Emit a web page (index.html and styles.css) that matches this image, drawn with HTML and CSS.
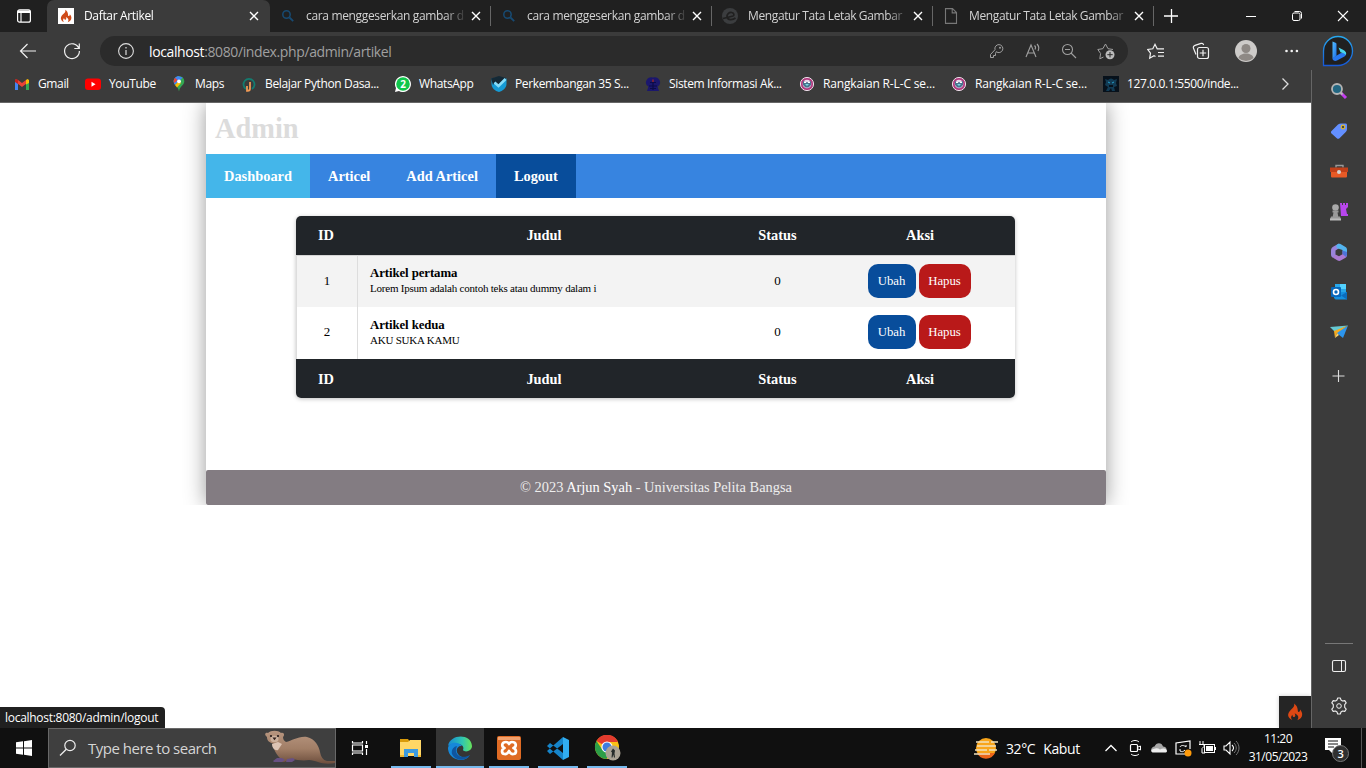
FILE: index.html
```html
<!DOCTYPE html>
<html lang="id">
<head>
<meta charset="utf-8">
<title>Daftar Artikel</title>
<link rel="stylesheet" href="styles.css">
</head>
<body>
<svg class="defs" width="0" height="0">
  <symbol id="x" viewBox="0 0 16 16"><path d="M4 4l8 8M12 4l-8 8" stroke="currentColor" stroke-width="1.4" fill="none"/></symbol>
  <symbol id="lens" viewBox="0 0 16 16"><circle cx="6.5" cy="6.5" r="3.7" fill="none" stroke="#174a72" stroke-width="1.5"/><path d="M9.5 9.500l3.700 3.700" stroke="#174a72" stroke-width="1.800"/></symbol>
  <symbol id="flame" viewBox="0 0 16 18"><path d="M7 .5c1 3-1.200 4.300-3.300 6.600C1.500 9.500.2 12 2 14.500c.8 1.200 2 2 3.300 2.600-1.600-1.700-1.600-3.800.2-5.400-.1 1.500.6 2.300 1.500 2.300 1.500-.1 1.700-1.600.7-3.700 3.600 1.700 4.600 4.300 2.600 6.900 3-.9 5-3 4.900-5.900 0-1.800-1-3.500-2.200-4.700.2 1.600-.6 2.500-1.300 2.400-1.900-.4.600-4.800-4.700-8.500z"/></symbol>
  <symbol id="mask" viewBox="0 0 16 16"><circle cx="8" cy="8" r="6.600" fill="#b03c7f" stroke="#eadde7" stroke-width="1"/><circle cx="8" cy="8" r="4.300" fill="#e7d8ea"/><path d="M4 5l2.500 1.200h3L12 5v4l-2.500 2.500h-3L4 9z" fill="#48738e"/><path d="M5 6h2v1H5zM9 6h2v1H9z" fill="#fff"/><path d="M6 8h4l-2 2z" fill="#78dce4"/></symbol>
</svg>
<div class="browser">
  <header class="tabs">
    <div class="tab-menu"><svg width="16" height="16" viewBox="0 0 16 16"><rect x="1.600" y="1.800" width="12.800" height="12.400" rx="2" fill="none" stroke="#fff" stroke-width="1.200"/><path d="M2 2.500h12v2.500H2z" fill="#fff"/><path d="M5 5v9" stroke="#fff" stroke-width="1.100"/></svg></div>
    <div class="tab active"><span class="favicon white"><svg width="12" height="14"><use href="#flame" fill="#cf4a18"/></svg></span><span class="label">Daftar Artikel</span><svg class="close"><use href="#x"/></svg></div>
    <div class="tab"><svg class="favicon"><use href="#lens"/></svg><span class="label">cara menggeserkan gambar d</span><svg class="close"><use href="#x"/></svg></div>
    <div class="tab"><svg class="favicon"><use href="#lens"/></svg><span class="label">cara menggeserkan gambar d</span><svg class="close"><use href="#x"/></svg></div>
    <div class="tab"><svg class="favicon" viewBox="0 0 16 16"><circle cx="8" cy="8" r="8" fill="#3b3d3f"/><path d="M1 10.500l10-2.500c1.500-.6 1.200-3-1.200-3.500C7 4 4.500 6.500 5 9c.5 3.300 5.500 3.300 8.500 1" fill="none" stroke="#202020" stroke-width="1.700"/></svg><span class="label wide">Mengatur Tata Letak Gambar</span><svg class="close"><use href="#x"/></svg></div>
    <div class="tab"><svg class="favicon" viewBox="0 0 16 16"><path d="M2.500.600h7l4 4v10.800h-11zM9.200.700v4.200h4.200" fill="none" stroke="#777" stroke-width="1.100"/></svg><span class="label wide">Mengatur Tata Letak Gambar</span><svg class="close"><use href="#x"/></svg></div>
    <svg class="new-tab" width="16" height="16"><path d="M8.500 1v14M1 8h14" stroke="#fff" stroke-width="1.300"/></svg>
    <div class="window-controls">
      <svg width="16" height="16"><path d="M3 8.500h10" stroke="#fff"/></svg>
      <svg width="16" height="16"><rect x="3.500" y="5" width="7.500" height="7.500" rx="1.500" fill="none" stroke="#fff"/><path d="M5.500 3.500h5a2 2 0 0 1 2 2v5" fill="none" stroke="#fff"/></svg>
      <svg width="16" height="16"><path d="M3 3l10 10M13 3L3 13" stroke="#fff" stroke-width="1.100"/></svg>
    </div>
  </header>
  <div class="toolbar">
    <svg class="nav-icon" width="20" height="20"><path d="M18 10H2.500M9.500 3l-7 7 7 7" fill="none" stroke="#f1f1f1" stroke-width="1.200"/></svg>
    <svg class="nav-icon" width="20" height="20"><path d="M16.900 7.500A7.400 7.400 0 1 0 17.400 10M17.300 2.500v5h-5" fill="none" stroke="#f1f1f1" stroke-width="1.200"/></svg>
    <div class="address">
      <svg width="16" height="16"><circle cx="8" cy="8" r="7.400" fill="none" stroke="#ddd" stroke-width="1.100"/><path d="M8 7v5M8 4v1.500" stroke="#ddd" stroke-width="1.200"/></svg>
      <span class="url"><b>localhost</b>:8080/index.php/admin/artikel</span>
      <svg width="16" height="16"><path d="M7.300 8.700a4 4 0 1 0-1.300-2L1.500 11.500V14.500h3v-2h2v-2z" fill="none" stroke="#a0a0a0"/><circle cx="11" cy="4.800" r="1" fill="#a0a0a0"/></svg>
      <svg width="16" height="16"><path d="M1 14L6 2l5 12M3 10h6M9.500 2.500c1.200 1 1.200 2.700.5 4M12 1c2 2 2 5 1 7" fill="none" stroke="#a0a0a0" stroke-width="1.100"/></svg>
      <svg width="16" height="16"><circle cx="6.500" cy="6.500" r="5" fill="none" stroke="#a0a0a0" stroke-width="1.100"/><path d="M4 6.500h5M10 10l5 5" stroke="#a0a0a0" stroke-width="1.100"/></svg>
      <svg width="18" height="18"><path d="M6.500 15l-3.700 1.800.8-5.300L.8 7.500l5-.8L8.500 2l2.500 4.700 5 .8" fill="none" stroke="#a0a0a0"/><circle cx="13" cy="12.700" r="4.500" fill="#bcbcbc"/><path d="M13 10v5.400M10.300 12.700h5.400" stroke="#2b2b2b"/></svg>
    </div>
    <div class="actions">
      <svg width="18" height="18"><path d="M8.500 14.500l-1.500-.8-4.300 2.500.8-5L.8 7.500l5-.7 2.200-4.500 2.200 4.500H17M11 10.500h6M11 14.200h6" fill="none" stroke="#f1f1f1" stroke-width="1.200"/></svg>
      <svg width="18" height="18"><path d="M4 12.500L1.500 6.200C1 5 1.500 4 3 3.400l6-2c1.300-.4 2.200.2 2.600 1.600" fill="none" stroke="#f1f1f1" stroke-width="1.200"/><rect x="5.500" y="5.500" width="11" height="11" rx="2" fill="none" stroke="#f1f1f1" stroke-width="1.200"/><path d="M11 7.800v6.500M7.700 11h6.500" stroke="#f1f1f1" stroke-width="1.200"/></svg>
      <svg width="22" height="22"><circle cx="11" cy="11" r="11" fill="#cdcbc9"/><circle cx="11" cy="8.500" r="4.500" fill="#8e8985"/><path d="M3.500 18c1-6 14-6 15 0A11 11 0 0 1 3.500 18z" fill="#8e8985"/></svg>
      <svg width="16" height="16"><g fill="#f1f1f1"><circle cx="3.500" cy="8" r="1.300"/><circle cx="8.700" cy="8" r="1.300"/><circle cx="13.900" cy="8" r="1.300"/></g></svg>
      <svg width="32" height="32" viewBox="0 0 32 32"><defs><linearGradient id="bl" x2="0" y2="1"><stop stop-color="#27a8ee"/><stop offset="1" stop-color="#1659d8"/></linearGradient><linearGradient id="bb" x2="1" y2="1"><stop stop-color="#55c0ff"/><stop offset="1" stop-color="#1c6de8"/></linearGradient></defs><path d="M1.500 30.500V16A14.500 14.500 0 1 1 16 30.500z" fill="#202020" stroke="url(#bl)" stroke-width="1.300"/><path d="M10.500 6.500l3 1.200c.7.300 1 .7 1 1.500V21l-4 2.500z" fill="url(#bb)"/><path d="M10.500 23l8-4.800 5.500-1c.5 2-.3 3.600-2 4.600l-7 3.800c-2 1-4.500 0-4.500-2.600z" fill="#2878f0"/><path d="M16.500 12.500l5 2.500c2.300 1.200 3 3 2.500 5-1-1.500-3.800-2-5.500-2.700z" fill="#48d6ea"/></svg>
    </div>
  </div>
  <div class="workspace">
    <div class="view">
      <nav class="bookmarks">
        <a><svg viewBox="0 0 16 16"><path d="M1 3.500v9.500h3V8l4 3 4-3V4L8 7 4 4z" fill="#ea4335"/><path d="M1 5v9h3V7z" fill="#4285f4"/><path d="M12 7v7h3V5z" fill="#34a853"/><path d="M12 4l1.500-1 1.500 1v3l-3 1.500z" fill="#fbbc04"/><path d="M1 4l1.500-1L4 4v4L1 6z" fill="#c5221f"/><path d="M4 8.500L8 11.500l4-3V14H4z" fill="#3b3b3b"/></svg><span>Gmail</span></a>
        <a><svg viewBox="0 0 16 16"><rect y="2.500" width="16" height="11.500" rx="3" fill="#f00"/><path d="M6.500 5.700l4 2.500-4 2.500z" fill="#fff"/></svg><span>YouTube</span></a>
        <a><svg viewBox="0 0 16 16"><path d="M8 0a5.300 5.300 0 0 0-5.300 5.300C2.700 9 7 10 8 15.500 9 10 13.300 9 13.300 5.300A5.300 5.300 0 0 0 8 0z" fill="#34a853"/><path d="M3 3.500A5.300 5.300 0 0 1 7 .1L11.700 1.500 4 9C2.500 7 2.400 5 3 3.500z" fill="#4285f4"/><path d="M2.800 4l1.300-2.300L6.500 4 3.500 7C2.700 6 2.500 5 2.800 4z" fill="#ea4335"/><path d="M4 9l4-4 2 2-4 4.500z" fill="#fbbc04"/><circle cx="8" cy="5.300" r="1.900" fill="#fff"/></svg><span>Maps</span></a>
        <a><svg viewBox="0 0 16 16"><path d="M5 13A5.500 5.500 0 1 1 11 13" fill="none" stroke="#147c70" stroke-width="1.800"/><path d="M9 6v6.500c0 1.500-1 2.300-2.300 2.300H6V10" fill="none" stroke="#f19a55" stroke-width="1.800"/></svg><span>Belajar Python Dasa...</span></a>
        <a><svg viewBox="0 0 16 16"><path d="M0 16l1-4a8 8 0 1 1 3 3z" fill="#fff"/><circle cx="8" cy="8" r="6.800" fill="#10c64b"/><text x="5.200" y="11.600" class="badge-text">2</text></svg><span>WhatsApp</span></a>
        <a><svg viewBox="0 0 16 16"><path d="M8 1l7.500 1.500V8c0 4-4 7-7.500 8C4 15 .5 12 .5 8V2.500z" fill="#169bd5"/><path d="M0 2.500L8 0l7 2-7 8-4-4-2 3z" fill="#142936"/><path d="M3.500 6.500L7.500 10l7-7" fill="none" stroke="#85dcf9" stroke-width="2.600"/></svg><span>Perkembangan 35 S...</span></a>
        <a><svg viewBox="0 0 16 16"><path d="M8 1.500a5.500 5 0 0 1 4.500 9L14 15H2l1.500-4.500A5.500 5 0 0 1 8 1.500z" fill="#1b176d"/><path d="M5 6.500h6M4 10h8M8 4v10M5 12.500h6" stroke="#0c0b48" stroke-width="1.200"/><path d="M7.300 3.500h1.400v2.500H7.300z" fill="#a12931"/></svg><span>Sistem Informasi Ak...</span></a>
        <a class="fit"><svg><use href="#mask"/></svg><span>Rangkaian R-L-C se...</span></a>
        <a class="fit"><svg><use href="#mask"/></svg><span>Rangkaian R-L-C se...</span></a>
        <a><svg viewBox="0 0 16 16"><path d="M0 0h16v16H0z" fill="#07111b"/><path d="M2 3l3 1c2-2 4-2 6 0l3-1-1 4 1 3-3 1 1 4H9l-1-3-2 3H3l2-4-3-2 1-3z" fill="#123b54"/><path d="M5 6l2 1M11 6L9 7" stroke="#25a0cb"/><path d="M6 9h4v2H6z" fill="#07111b"/></svg><span>127.0.0.1:5500/inde...</span></a>
        <svg class="more" width="16" height="16"><path d="M5.500 2.500L11 8l-5.500 5.500" fill="none" stroke="#ddd" stroke-width="1.300"/></svg>
      </nav>
      <main class="page">
        <div class="container">
          <h1>Admin</h1>
          <nav class="menu"><a class="current">Dashboard</a><a>Articel</a><a>Add Articel</a><a class="hover">Logout</a></nav>
          <table>
            <colgroup><col class="c-id"><col class="c-title"><col class="c-status"><col class="c-action"></colgroup>
            <thead><tr><th>ID</th><th>Judul</th><th>Status</th><th>Aksi</th></tr></thead>
            <tbody>
              <tr><td>1</td><td class="article"><b>Artikel pertama</b><small>Lorem Ipsum adalah contoh teks atau dummy dalam i</small></td><td>0</td><td class="buttons"><a class="btn edit">Ubah</a><a class="btn delete">Hapus</a></td></tr>
              <tr><td>2</td><td class="article"><b>Artikel kedua</b><small>AKU SUKA KAMU</small></td><td>0</td><td class="buttons"><a class="btn edit">Ubah</a><a class="btn delete">Hapus</a></td></tr>
            </tbody>
            <tfoot><tr><th>ID</th><th>Judul</th><th>Status</th><th>Aksi</th></tr></tfoot>
          </table>
          <footer>© 2023 <span>Arjun Syah</span> - Universitas Pelita Bangsa</footer>
        </div>
        <div class="link-status">localhost:8080/admin/logout</div>
        <div class="debug"><svg width="16" height="18"><use href="#flame" fill="#dd4814"/></svg></div>
      </main>
    </div>
    <aside class="sidebar">
      <span><svg width="18" height="18"><path d="M11 11l5 5" stroke="#c43df0" stroke-width="3"/><path d="M10 10l2.500 2.500" stroke="#bbb" stroke-width="2"/><circle cx="7" cy="7" r="5" fill="#226681" stroke="#b4b4b4" stroke-width="1.800"/></svg></span>
      <span><svg width="18" height="18"><path d="M1.500 9L8 2.500C9 1.700 10 1.500 11 1.500h4.500c1 0 1.500.6 1.500 1.500v4c0 1-.3 2-1 2.700l-6.500 6.600c-1 .8-2 .7-2.700 0L1.500 11.500c-.7-.7-.7-1.800 0-2.500z" fill="#638fff"/><circle cx="13" cy="5" r="1.800" fill="#444" stroke="#dfb72b" stroke-width="1.200"/></svg></span>
      <span><svg width="18" height="18"><path d="M6 5.500V3.500h7v2" fill="none" stroke="#999" stroke-width="1.400"/><path d="M1 8h16v6.500a1 1 0 0 1-1 1H2a1 1 0 0 1-1-1z" fill="#e85a26"/><path d="M0 5.500h18v4.500H0z" fill="#c1401a"/><circle cx="9" cy="10" r="2" fill="#d2d2d2"/></svg></span>
      <span><svg width="18" height="18"><path d="M10 0h2v2h1V0h2v2h1V0h2v4l-2 2 1 5h1v2h-7z" fill="#b846ed"/><circle cx="5.500" cy="4.500" r="3.300" fill="#aaa"/><path d="M2.500 7.500h6v2h-1l.8 4H10l1 3H0l1-3h1.700l.8-4h-1z" fill="#999"/><path d="M0 15.500h11v2H0z" fill="#bbb"/></svg></span>
      <span><svg width="18" height="18" viewBox="0 0 18 18"><path d="M9 .5L3.500 3.500C2 4.300 1 5.500 1 7.500v4c0 1.500.7 2.500 2 3.300l2.500-1.500V7.500L9 5.300z" fill="#9a83dc"/><path d="M8.500.800c.7-.3 1.500-.2 2 .2l5 3C16.500 4.700 17 5.700 17 7v4.500l-4.500-3V7L6.500 5V2z" fill="#53b4ef"/><path d="M5.500 11.500L9 13.200l3.500-2V8.500L17 10v2c0 1.200-.5 2.200-1.500 2.800l-4.800 2.700c-1 .5-2 .5-3 0L3 14.800z" fill="#aa7ad2"/><path d="M12.500 7.500L17 9v2.500c0 1-.5 1.800-1 2.500l-3.500-3z" fill="#4d74d7"/></svg></span>
      <span><svg width="18" height="18"><path d="M5 1h11v9H5z" fill="#28a8ea"/><path d="M10 1h6v5h-6z" fill="#52d2ff"/><path d="M4 9h13v7.500H5.500L4 15z" fill="#1490df"/><path d="M17 9v7.500L11 12.500z" fill="#0b6cbd"/><rect x="1" y="4" width="10" height="10" rx="1" fill="#0868bb"/><circle cx="6" cy="9" r="2.500" fill="none" stroke="#fff" stroke-width="1.600"/></svg></span>
      <span><svg width="18" height="18"><path d="M0 4l18-1.500L5 9z" fill="#65c9d3"/><path d="M18 2.500L13 15 6 9.500z" fill="#2c95ed"/><path d="M4 8l14-5.500L7 10l-2 5z" fill="#f5aa1f"/><path d="M7 10l2 2-4 3z" fill="#fbd36d"/></svg></span>
      <span class="add"><svg width="18" height="18"><path d="M8.500 3v12M2.500 9h12" stroke="#ddd" stroke-width="1.100"/></svg></span>
      <hr>
      <span><svg width="18" height="18"><rect x="2.500" y="3.500" width="13" height="11" rx="1.500" fill="none" stroke="#eee" stroke-width="1.100"/><path d="M11.500 3.500v11" stroke="#eee"/></svg></span>
      <span><svg width="18" height="18" viewBox="0 0 18 18"><path d="M7 3l.7-2h2.600L11 3l1.500 1 2.300-.4 1.400 2.300-1.500 1.800v2.600l1.500 1.800-1.400 2.300-2.300-.4L11 15l-.7 2H7.700L7 15l-1.500-1-2.300.4-1.400-2.300 1.500-1.800V7.700L1.800 5.900l1.400-2.300 2.300.4z" fill="none" stroke="#eee" stroke-width="1.100" stroke-linejoin="round"/><circle cx="9" cy="9" r="2.300" fill="none" stroke="#eee"/></svg></span>
    </aside>
  </div>
</div>
<div class="taskbar">
  <div class="start"><svg width="16" height="16"><path d="M0 2.300l7-1v6.200H0zM8 1.200L16 0v7.500H8zM0 8.500h7v6.200l-7-1zM8 8.500h8V16l-8-1.200z" fill="#fff"/></svg></div>
  <div class="search">
    <svg width="18" height="18"><circle cx="11" cy="6.500" r="5.200" fill="none" stroke="#eee" stroke-width="1.200"/><path d="M7.300 10.200L1 16.500" stroke="#eee" stroke-width="1.300"/></svg>
    <span>Type here to search</span>
    <svg class="otter" width="70" height="36" viewBox="0 0 70 36"><defs><linearGradient id="fur" x2="0" y2="1"><stop stop-color="#b89680"/><stop offset=".55" stop-color="#a17e66"/><stop offset="1" stop-color="#6d4e3d"/></linearGradient></defs><path d="M2 7C-1 5 0 2 3 3c3-3 10-3 13 0 3-1 4 2 2 4 0 2 1 4 3 5 6-1 12-6 21-5 8 2 12 9 13 15 1 5 3 8 7 9h8v2c-5 1-12 1-17-1-3-1-6-2-9-2-6 1-12 0-17-1l-8 3h-7l3-4c-4-4-7-9-6-14C3 12 2 10 2 7z" fill="url(#fur)"/><path d="M7 14c0 4 3 7 6 6l4-6-4-2z" fill="#dcc4b5"/><ellipse cx="9.500" cy="9" rx="4" ry="3.300" fill="#cbb09d"/><circle cx="6" cy="6" r="1.100" fill="#251b1a"/><circle cx="13" cy="6" r="1.100" fill="#251b1a"/><path d="M7.500 7.500h4l-2 2.700z" fill="#30201e"/><path d="M8 31l4-3h5l3 2-3 2H9zM22 29l6-1 2 2-3 2h-6z" fill="#675083"/></svg>
  </div>
  <div class="task-view"><svg width="18" height="16"><path d="M1.500 1v2h10V1M1.500 15v-2h10v2M1.500 5h10v6h-10zM15.500 1v3M15.500 9v6" fill="none" stroke="#fff" stroke-width="1.200"/><path d="M14 5h3v3h-3z" fill="#fff"/></svg></div>
  <div class="apps">
    <span><svg width="24" height="24"><path d="M1 3h8l2 3H1z" fill="#d99b0a"/><path d="M1 6h8l2-2h11v16H1z" fill="#ffd766"/><path d="M5 13h14v8h-4v-4H9v4H5z" fill="#3d9bdf"/><path d="M1 19h4v2H1zM19 19h3v2h-3z" fill="#efb831"/></svg></span>
    <span class="focused"><svg width="24" height="24"><defs><linearGradient id="eg"><stop stop-color="#1689d4"/><stop offset=".6" stop-color="#30c6b1"/><stop offset="1" stop-color="#68e35b"/></linearGradient></defs><path d="M0 10C2-2 23-3 24 10c0 5-7 7-9 4 2-5-4-7-8-5C3 8 1 9 0 10z" fill="url(#eg)"/><path d="M0 12c1-6 10-7 14-2-6-1-8 8 0 11 3 1 6 0 8-2-3 5-9 6-14 4-5-2-8-6-8-11z" fill="#1688d9"/><path d="M8 13c-1 7 7 10 14 6-4 7-15 6-18-1-1-4 1-7 5-8z" fill="#0f55a0"/></svg></span>
    <span><svg width="24" height="24"><rect width="24" height="24" rx="2" fill="#df6b24"/><path d="M1 1h22v3H1z" fill="#f1a16e"/><path d="M12 8C11 6 9 5.800 7.500 6.200 4.500 7 4.500 11 7.500 12c-3 1-3.500 5.500 0 6 2 .3 3.500-1 4.500-3 1 2 2.500 3.300 4.500 3 3.500-.5 3-5 0-6 3-1 3-5 0-5.800C15 5.800 13 6 12 8z" fill="none" stroke="#fff" stroke-width="2.700" stroke-linejoin="round"/></svg></span>
    <span><svg width="24" height="24"><path d="M17 1v7L4 18l-3-3zM17 24v-7L4 7l-3 3z" fill="#1685ca"/><path d="M17 1l6 3v17l-6 3z" fill="#31adf0"/></svg></span>
    <span><svg width="28" height="26"><circle cx="14" cy="12" r="12" fill="#fbc116"/><path d="M14 12L3.500 6A12 12 0 0 1 25 7H14z" fill="#e33b2e"/><path d="M3.500 6a12 12 0 0 0 10 18l5-8-9-1z" fill="#2c9e48"/><circle cx="14" cy="12" r="5.600" fill="#fff"/><circle cx="14" cy="12" r="4.500" fill="#3d7de0"/><circle cx="20" cy="18" r="7.500" fill="#aaa294"/><path d="M20 13.500l2 2-.5 3 .5 4h-1l-.7-3-.8 3h-1l.5-5-1-1z" fill="#262b2a"/></svg></span>
  </div>
  <div class="weather"><svg width="24" height="22"><circle cx="12" cy="11" r="10" fill="#f9a51a"/><path d="M3 16a10 10 0 0 0 18 0z" fill="#ed6519"/><path d="M2 5h13M17 5h7M3 9h19M1 13h12M15 13h8M0 17h16" stroke="#f1e1bd" stroke-width="1.600"/></svg><span>32°C</span><span>Kabut</span></div>
  <div class="tray">
    <svg viewBox="0 0 18 18"><path d="M3.500 12L9 6.500l5.500 5.500" fill="none" stroke="#fff" stroke-width="1.300"/></svg>
    <svg viewBox="0 0 18 18"><rect x="4.500" y="5.500" width="7" height="7" rx="1" fill="none" stroke="#fff" stroke-width="1.200"/><path d="M12 8l2.500-1v4L12 10M5 3c2-2 6-2 8 0M5 15c2 2 6 2 8 0" fill="none" stroke="#fff"/></svg>
    <svg viewBox="0 0 18 18"><path d="M3 13c-3-1-2-5 1.500-5.500C6 3 12 3 13 7.500c4 0 5 5 1 5.500z" fill="#a7a7a7"/><path d="M2.500 13.500c-2-1-1.500-3 1-3.500C6 9 8 9 10 10.500c3-2 7-1 7 1.500 0 1-1 1.500-2 1.500z" fill="#eee"/></svg>
    <svg viewBox="0 0 18 18"><path d="M11 15H2V4l14-2v8" fill="none" stroke="#fff" stroke-width="1.200"/><path d="M6 8c1-2 4-2 6 0V6M6 10v2c2 1 3 1 5-1" fill="none" stroke="#fff"/><circle cx="14" cy="14" r="3.500" fill="#ff9b0b"/></svg>
    <svg viewBox="0 0 18 18"><path d="M2 2v3M5 2v3M1 5.500h5v2l-2 2v4.500h3" fill="none" stroke="#fff"/><rect x="6.500" y="5.500" width="10" height="8" fill="none" stroke="#fff"/><path d="M8 7h7v5H8zM16.500 8H18v3h-1.500z" fill="#fff"/></svg>
    <svg viewBox="0 0 18 18"><path d="M2 7h2l4-4v12l-4-4H2zM10 6c2 2 2 4 0 6" fill="none" stroke="#fff" stroke-width="1.100"/><path d="M12 4c3 3 3 7 0 10M14 2c4 4 4 10 0 14" fill="none" stroke="#777"/></svg>
  </div>
  <div class="clock"><span>11:20</span><span>31/05/2023</span></div>
  <div class="notify"><svg width="26" height="26"><path d="M1 1h16v12H9v4l-4-4H1z" fill="#fff"/><path d="M4 4h10M4 7h10M4 10h6" stroke="#111"/><circle cx="16.500" cy="16.500" r="8" fill="#303030" stroke="#777"/><text x="13.500" y="20.500">3</text></svg></div>
</div>
</body>
</html>
```
FILE: styles.css
```css
* { box-sizing: border-box; }
body { margin: 0; width: 1366px; height: 768px; overflow: hidden; display: flex; flex-direction: column; background: #fff; font-family: "Open Sans", "Noto Sans", sans-serif; font-size: 12px; color: #fff; }
svg { display: block; flex: none; }
.defs { position: absolute; }
.browser { height: 728px; display: flex; flex-direction: column; }
.tabs { height: 32px; flex: none; background: #202020; display: flex; align-items: center; }
.tab-menu { width: 47px; display: flex; justify-content: center; }
.tab { width: 221px; height: 32px; display: flex; align-items: center; padding: 0 6.500px 0 10px; color: #d2d2d2; border-right: 1px solid transparent; background: linear-gradient(#666, #666) right 6px / 1px 20px no-repeat border-box; }
.tab.active { width: 223px; padding: 0 7px 0 11px; background: #3b3b3b; border-radius: 7px 7px 0 0; color: #fff; }
.favicon { width: 16px; height: 16px; margin-right: 10px; flex: none; }
.favicon.white { background: #fff; display: grid; place-items: center; }
.label { flex: 1; white-space: nowrap; letter-spacing: -.34px; line-height: 18px; -webkit-mask-image: linear-gradient(90deg, #000 88%, transparent 102%); margin-right: 4px; }
.label.wide { letter-spacing: -.38px; }
.close { width: 16px; height: 16px; color: #fff; }
.new-tab { margin-left: 9px; }
.window-controls { margin-left: auto; display: flex; gap: 30px; padding-right: 15px; }

.toolbar { height: 38px; flex: none; background: #3b3b3b; display: flex; align-items: center; }
.nav-icon { margin-left: 18px; }
.nav-icon + .nav-icon { margin-left: 24px; }
.address { width: 1028px; height: 30px; margin-left: 18px; border-radius: 15px; background: #2b2b2b; display: flex; align-items: center; padding: 0 13px 0 18px; gap: 20px; }
.url { flex: 1; margin-left: -5px; font-size: 14px; letter-spacing: -.39px; color: #a0a0a0; white-space: nowrap; }
.url b { color: #fff; font-weight: 400; }
.actions { display: flex; align-items: center; margin-left: 5px; }
.actions svg { margin: 0 13.5px; }
.actions svg:nth-child(3) { margin: 0 11.5px; }
.actions svg:nth-child(4) { margin: 0 15px; }
.actions svg:nth-child(5) { margin: 0 8px; }

.workspace { flex: 1; display: flex; min-height: 0; }
.view { width: 1311px; display: flex; flex-direction: column; }
.bookmarks { height: 33px; flex: none; background: #3b3b3b; border-bottom: 1px solid #666; display: grid; grid-template-columns: 71px 86px 70px 154px 96px 154px 154px 152px 152px 174px 16px; padding: 0 0 5px 14px; align-items: center; }
.bookmarks a { display: flex; align-items: center; gap: 8px; white-space: nowrap; letter-spacing: -.36px; }
.bookmarks a.fit { letter-spacing: -.15px; }
.bookmarks a svg { width: 16px; height: 16px; }
.badge-text { font-size: 10px; font-weight: 700; fill: #fff; }

.page { flex: 1; position: relative; overflow: hidden; background: #fff; color: #000; font-family: "Liberation Serif", serif; display: flow-root; clip-path: inset(0); }
.container { width: 900px; height: 402px; margin-left: 206px; background: #fff; box-shadow: 0 0 20px #999; clip-path: inset(0 -30px 0 -30px); display: flex; flex-direction: column; }
h1 { height: 51px; margin: 0; padding-left: 9px; font-size: 28.4px; line-height: 51px; color: #dcdcdc; }
.menu { height: 44px; background: #3784e0; display: flex; }
.menu a { padding: 0 18px; line-height: 44px; font-size: 14.4px; font-weight: 700; color: #fff; }
.menu a.current { background: #44b6ea; }
.menu a.hover { background: #084d9b; }
table { width: 719px; margin: 18px 0 0 90px; table-layout: fixed; border-collapse: separate; border-spacing: 0; border-radius: 5px; overflow: hidden; box-shadow: 0 1px 4px rgba(0,0,0,.25); }
.c-id { width: 62px; }
.c-title { width: 372px; }
.c-status { width: 95px; }
.c-action { width: 190px; }
th { height: 39px; padding: 0; background: #212529; color: #fff; font-size: 14.4px; }
th:first-child { padding-right: 2px; }
tfoot th { padding-top: 1px; }
td { height: 52px; padding: 0 0 2px; text-align: center; font-size: 13px; vertical-align: middle; }
td:first-child { border-left: 1px solid #ddd; border-right: 1px solid #ddd; }
tbody tr:first-child { background: #f3f3f3; }
tbody tr:first-child td { border-top: 1px solid #d5d5d5; }
.article { text-align: left; padding-left: 12px; }
.article b, .article small { display: block; line-height: 16px; }
.article b { font-size: 12.8px; letter-spacing: -.08px; }
.article small { font-size: 11px; line-height: 15px; letter-spacing: -.22px; }
.buttons { font-size: 0; padding-right: 2px; }
.btn { display: inline-block; height: 34px; line-height: 34px; border-radius: 10px; font-size: 12.8px; color: #fff; }
.edit { width: 48px; background: #084d9b; margin-right: 3px; }
.delete { width: 52px; background: #b91919; }
footer { height: 35px; margin-top: auto; background: #837c82; border-radius: 2px; text-align: center; line-height: 35px; font-size: 14.4px; color: #eee; }
footer span { color: #fff; }
.link-status { position: absolute; left: 0; bottom: 0; width: 165px; height: 21px; background: #202020; color: #fff; border-radius: 0 4px 0 0; padding-left: 5px; line-height: 21px; font-family: "Open Sans", sans-serif; letter-spacing: -.28px; white-space: nowrap; }
.debug { position: absolute; right: 0; bottom: 0; width: 32px; height: 32px; background: #252525; display: grid; place-items: center; box-shadow: 0 0 4px #ccc; }

.sidebar { width: 55px; background: #3b3b3b; border-left: 1px solid #666; display: flex; flex-direction: column; align-items: center; padding: 1px 0 2px; }
.sidebar span { height: 40.2px; flex: none; display: grid; place-items: center; }
.sidebar .add { margin-top: 4px; }
.sidebar hr { width: 28px; height: 1px; border: 0; background: #777; margin: auto 0 2px; }

.taskbar { height: 40px; background: #101010; display: flex; align-items: center; }
.start { width: 48px; display: grid; place-items: center; }
.search { width: 288px; height: 40px; background: #3f3f3f; border: 1px solid #686868; display: flex; align-items: center; padding-left: 10px; color: #d5d5d5; font-size: 15px; letter-spacing: -.5px; }
.search span { margin-left: 11px; white-space: nowrap; }
.otter { margin-left: auto; }
.task-view { width: 51px; padding-right: 3px; display: grid; place-items: center; }
.apps { display: flex; height: 40px; gap: 1px; }
.apps span { width: 48px; display: grid; place-items: center; background: linear-gradient(#76b9ed, #76b9ed) center bottom / 40px 2px no-repeat; }
.apps .focused { background: linear-gradient(#76b9ed, #76b9ed) center bottom / 48px 2px no-repeat #353535; }
.weather { display: flex; align-items: center; width: 124px; margin-left: auto; font-size: 14px; letter-spacing: -.4px; gap: 8px; }
.tray { display: flex; gap: 6px; }
.tray svg { width: 18px; height: 18px; }
.tray svg:first-child { margin-left: 4px; }
.clock { width: 76px; display: flex; flex-direction: column; align-items: center; line-height: 18px; letter-spacing: -.5px; }
.notify { width: 46px; height: 40px; display: grid; justify-content: start; align-items: center; padding: 4px 0 0 8px; border-right: 1px solid #555; margin-right: 4px; }
.notify text { font-size: 11px; fill: #fff; font-weight: 600; }
```
